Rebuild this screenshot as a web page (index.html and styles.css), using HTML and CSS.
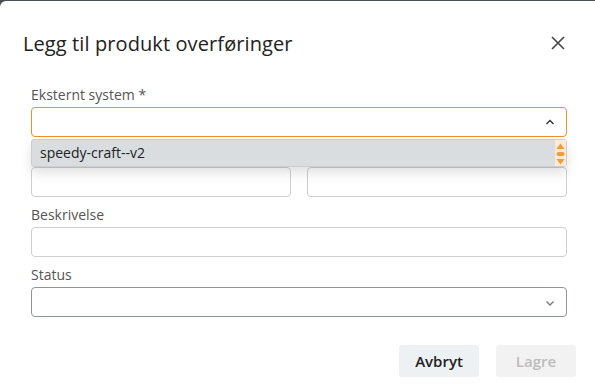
FILE: index.html
```html
<!DOCTYPE html>
<html lang="nb">
<head>
    <meta charset="UTF-8">
    <meta name="viewport" content="width=device-width, initial-scale=1.0">
    <title>Legg til produkt overføringer</title>
    <link rel="stylesheet" href="styles.css">
</head>
<body>
    <div class="modal">
        <div class="modal-header">
            <h2>Legg til produkt overføringer</h2>
            <button class="close" aria-label="Lukk">
                <svg width="16" height="16" viewBox="0 0 16 16"><path d="M2 2 L14 14 M14 2 L2 14" stroke="#444" stroke-width="1.6" fill="none"/></svg>
            </button>
        </div>

        <div class="modal-body">
            <div class="field">
                <label>Eksternt system *</label>
                <div class="select open">
                    <svg class="chevron" width="10" height="6" viewBox="0 0 10 6"><path d="M1.5 5 L5 1.5 L8.5 5" stroke="#333" stroke-width="1.4" fill="none"/></svg>
                </div>
                <div class="dropdown">
                    <div class="option">speedy-craft--v2</div>
                    <div class="scrollbar">
                        <svg width="11" height="28" viewBox="0 0 11 28">
                            <path d="M1.5 9 L5.5 3.5 L9.5 9 Z" fill="#f39a3b"/>
                            <rect x="1.5" y="12" width="8" height="4" rx="2" fill="#f39a3b"/>
                            <path d="M1.5 19 L9.5 19 L5.5 24.5 Z" fill="#f39a3b"/>
                        </svg>
                    </div>
                </div>
            </div>

            <!-- labels of this row sit under the open dropdown -->
            <div class="row">
                <div class="field">
                    <label>&nbsp;</label>
                    <div class="input"></div>
                </div>
                <div class="field">
                    <label>&nbsp;</label>
                    <div class="input"></div>
                </div>
            </div>

            <div class="field">
                <label>Beskrivelse</label>
                <div class="input"></div>
            </div>

            <div class="field">
                <label>Status</label>
                <div class="select status">
                    <svg class="chevron" width="10" height="6" viewBox="0 0 10 6"><path d="M1.5 1.5 L5 5 L8.5 1.5" stroke="#777" stroke-width="1.3" fill="none"/></svg>
                </div>
            </div>
        </div>

        <div class="modal-footer">
            <button class="btn btn-cancel">Avbryt</button>
            <button class="btn btn-save" disabled>Lagre</button>
        </div>
    </div>
</body>
</html>
```

FILE: styles.css
```css
html, body {
    margin: 0;
    height: 100%;
    overflow: hidden;
}
body {
    background-color: #4a4f55;
    font-family: "Open Sans", "Noto Sans", sans-serif;
    padding-top: 1px;
    box-sizing: border-box;
}
.modal {
    background-color: white;
    width: 602px;
    height: 400px;
    border-radius: 6px;
    box-sizing: border-box;
}
.modal-header {
    display: flex;
    justify-content: space-between;
    align-items: center;
    padding: 27px 29px 0 23px;
    height: 30px;
}
.modal-header h2 {
    margin: 0;
    font-size: 20px;
    font-weight: 400;
    color: #222;
    letter-spacing: 0.1px;
}
.close {
    background: transparent;
    border: none;
    padding: 0;
    width: 16px;
    height: 16px;
    margin-right: 7px;
    cursor: pointer;
}
.close svg {
    display: block;
}
.modal-body {
    padding: 27px 35px 0 31px;
}
.field {
    position: relative;
    margin-bottom: 8px;
    flex: 1;
}
.field label {
    display: block;
    font-size: 14px;
    line-height: 20px;
    color: #555;
    margin-bottom: 2px;
}
.row {
    display: flex;
    gap: 16px;
}
.input, .select {
    height: 30px;
    border: 1px solid #cfcfcf;
    border-radius: 4px;
    box-sizing: border-box;
    position: relative;
}
.select .chevron {
    position: absolute;
    right: 11px;
    top: 12px;
}
.select.open {
    border-color: #f0922b;
}
.select.open .chevron {
    top: 11px;
}
.select.status {
    border-color: #8d959c;
}
.dropdown {
    position: absolute;
    left: 0;
    right: 0;
    top: 54px;
    height: 28px;
    display: flex;
    background-color: #d9dde0;
    border: 1px solid #c9ced2;
    border-radius: 3px;
    box-shadow: 0 6px 12px rgba(0, 0, 0, 0.12);
    z-index: 10;
    box-sizing: border-box;
}
.option {
    flex: 1;
    padding-left: 8px;
    font-size: 14px;
    line-height: 26px;
    color: #222;
}
.scrollbar {
    width: 11px;
    background-color: #fde9d5;
}
.scrollbar svg {
    display: block;
}
.modal-footer {
    display: flex;
    justify-content: flex-end;
    gap: 17px;
    padding: 20px 26px 0 0;
}
.btn {
    width: 80px;
    height: 32px;
    border: none;
    border-radius: 3px;
    font-family: "Open Sans", "Noto Sans", sans-serif;
    font-size: 15px;
    font-weight: 600;
}
.btn-cancel {
    background-color: #edf1f4;
    color: #222;
}
.btn-save {
    background-color: #f2f2f2;
    color: #bcbcbc;
}
```
